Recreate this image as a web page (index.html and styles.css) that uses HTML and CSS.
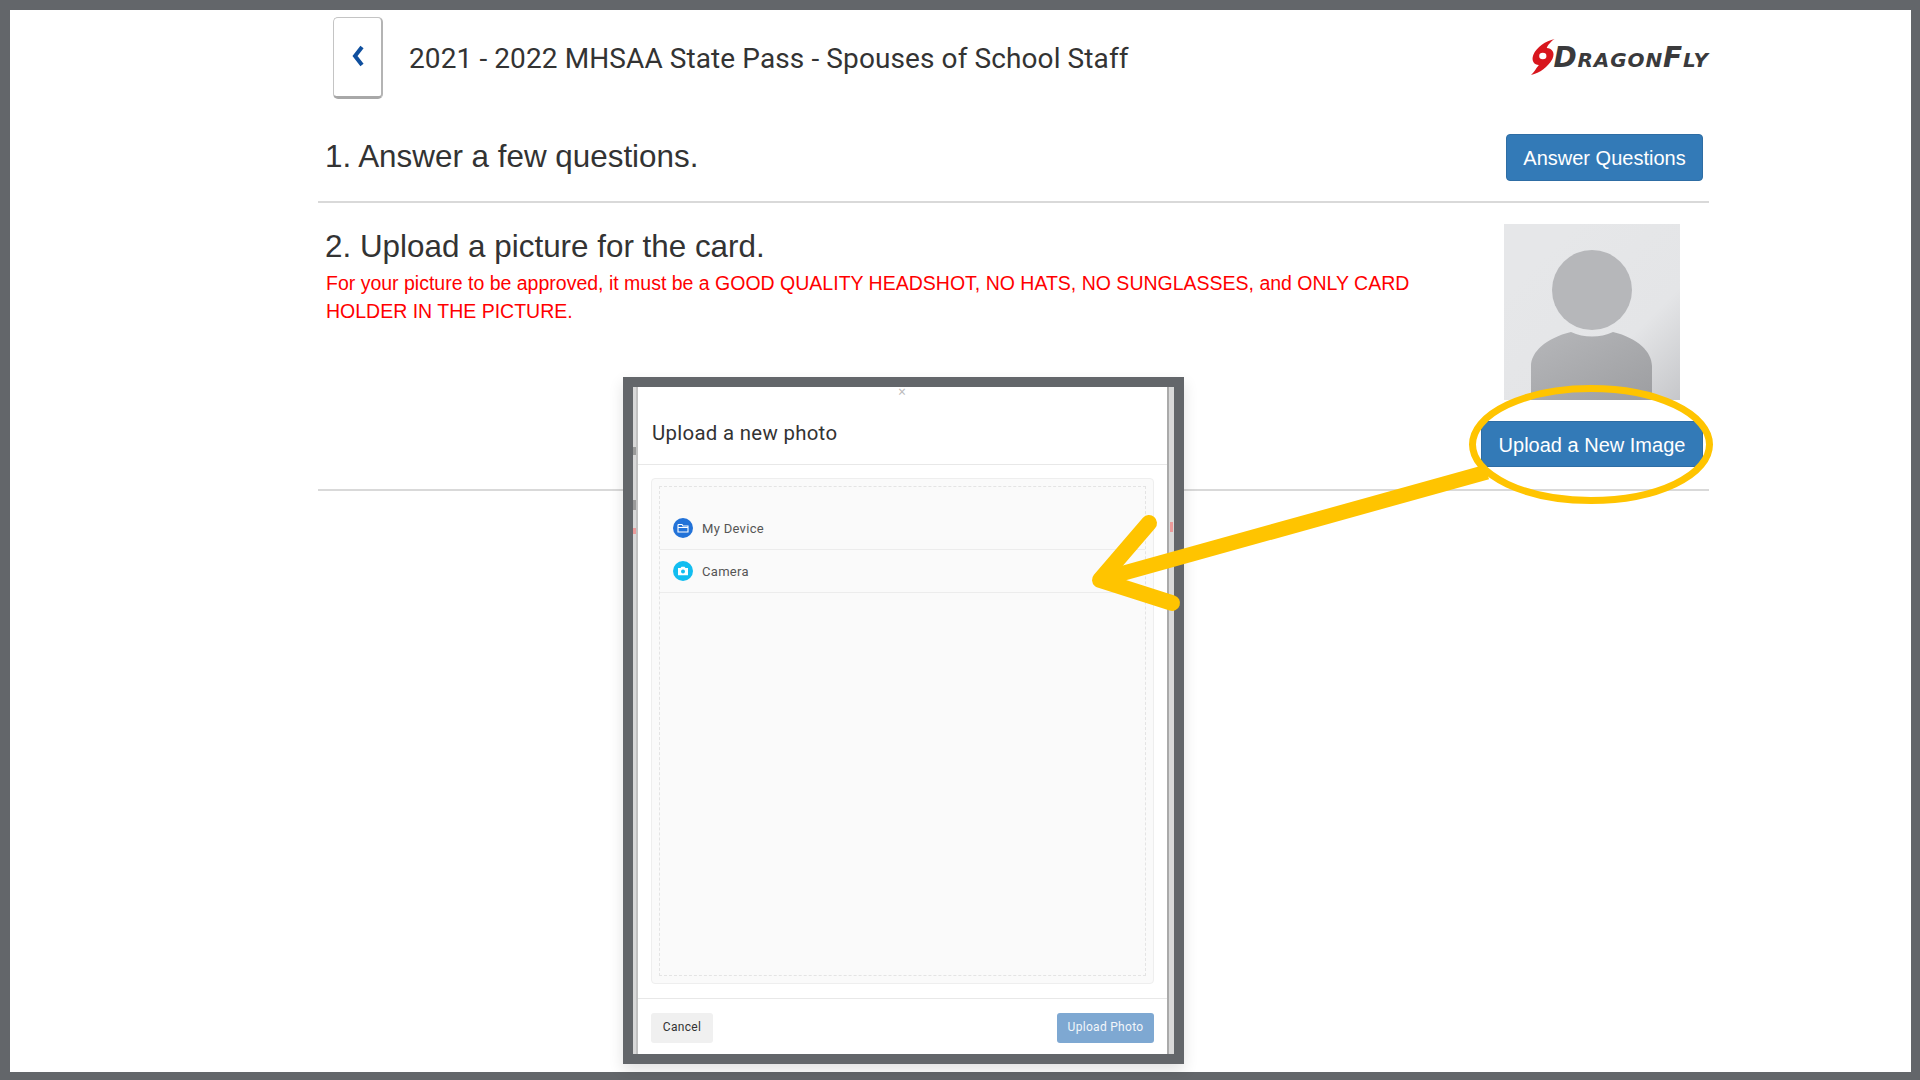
FILE: index.html
```html
<!DOCTYPE html>
<html lang="en">
<head>
    <meta charset="UTF-8">
    <meta name="viewport" content="width=device-width, initial-scale=1.0">
    <title>Upload a New Image</title>
    <link rel="stylesheet" href="styles.css">
</head>
<body>
    <div class="page">
        <header class="top-bar">
            <button class="back-btn" aria-label="Back">
                <svg width="14" height="22" viewBox="0 0 14 22"><path d="M11 2 L4 11 L11 20" fill="none" stroke="#0f4f9e" stroke-width="4"/></svg>
            </button>
            <h1 class="page-title">2021 - 2022 MHSAA State Pass - Spouses of School Staff</h1>
            <div class="logo">
                <svg class="logo-swirl" width="27" height="38" viewBox="0 0 24 38" preserveAspectRatio="none">
                    <path d="M21 1 C13 3 5 9 2 17 C0 23 3 27 7 27 C4 31 3 34 0 37 C8 35 15 29 19 21 C22 14 18 10 14 10 C15 7 18 3 21 1 Z" fill="#d8161d"/>
                    <circle cx="10.5" cy="18" r="3.2" fill="#fff"/>
                </svg>
                <span class="logo-text">DragonFly</span>
            </div>
        </header>

        <section class="step step-one">
            <h2 class="step-title">1. Answer a few questions.</h2>
            <a class="btn-blue btn-answer">Answer Questions</a>
        </section>

        <section class="step step-two">
            <div class="step-text">
                <h2 class="step-title">2. Upload a picture for the card.</h2>
                <p class="warning">For your picture to be approved, it must be a GOOD QUALITY HEADSHOT, NO HATS, NO SUNGLASSES, and ONLY CARD HOLDER IN THE PICTURE.</p>
            </div>
            <div class="photo-col">
                <svg class="avatar" width="176" height="176" viewBox="0 0 176 176">
                    <defs>
                        <linearGradient id="avatarBg" x1="0.2" y1="0.2" x2="1" y2="1">
                            <stop offset="0" stop-color="#e6e7e9"/>
                            <stop offset="0.6" stop-color="#e4e5e7"/>
                            <stop offset="1" stop-color="#c6c7ca"/>
                        </linearGradient>
                        <linearGradient id="avatarBody" x1="0" y1="0" x2="1" y2="1">
                            <stop offset="0" stop-color="#b6b7ba"/>
                            <stop offset="1" stop-color="#9d9ea1"/>
                        </linearGradient>
                    </defs>
                    <rect width="176" height="176" fill="url(#avatarBg)"/>
                    <circle cx="88" cy="66" r="40" fill="#b6b7ba"/>
                    <path d="M27 176 V142 C27 128 42 114 67 108 C80 114 96 114 109 108 C134 114 148 128 148 142 V176 Z" fill="url(#avatarBody)"/>
                </svg>
                <a class="btn-blue btn-upload">Upload a New Image</a>
            </div>
        </section>
    </div>

    <div class="modal">
        <div class="modal-side">
            <span class="scrap scrap-a"></span>
            <span class="scrap scrap-b"></span>
            <span class="scrap scrap-c"></span>
            <span class="scrap scrap-d"></span>
            <div class="modal-content">
                <span class="modal-close">&times;</span>
                <div class="modal-head">Upload a new photo</div>
                <div class="modal-main">
                    <div class="dropzone">
                        <ul class="source-list">
                            <li class="source-row">
                                <span class="source-icon icon-device">
                                    <svg width="12" height="12" viewBox="0 0 12 12"><path d="M1 3 V10 H11 V4 H6 L5 2.5 H1.5 Z M1 5.5 H11" fill="none" stroke="#fff" stroke-width="1.1"/></svg>
                                </span>
                                My Device
                            </li>
                            <li class="source-row">
                                <span class="source-icon icon-camera">
                                    <svg width="12" height="12" viewBox="0 0 12 12"><path fill-rule="evenodd" d="M1 3 H3.5 L4.5 1.8 H7.5 L8.5 3 H11 V10.2 H1 Z M6 4.4 A2 2 0 1 0 6 8.4 A2 2 0 1 0 6 4.4 Z" fill="#fff"/></svg>
                                </span>
                                Camera
                            </li>
                        </ul>
                    </div>
                </div>
                <div class="modal-foot">
                    <a class="btn-cancel">Cancel</a>
                    <a class="btn-photo">Upload Photo</a>
                </div>
            </div>
        </div>
    </div>

    <svg class="callout" width="1920" height="1080" viewBox="0 0 1920 1080">
        <ellipse cx="1591" cy="444.500" rx="118.500" ry="56" fill="none" stroke="#ffc400" stroke-width="7"/>
        <path d="M1487 472 L1106 578" fill="none" stroke="#ffc400" stroke-width="15"/>
        <path d="M1149 523 L1100 580 L1172 603" fill="none" stroke="#ffc400" stroke-width="16" stroke-linecap="round" stroke-linejoin="round"/>
    </svg>
</body>
</html>
```

FILE: styles.css
```css
* {
    box-sizing: border-box;
}

html, body {
    margin: 0;
    height: 100%;
}

body {
    background-color: #fff;
    border-style: solid;
    border-color: #63666a;
    border-width: 10px 9px 8px 10px;
    font-family: "Liberation Sans", Arial, sans-serif;
    overflow: hidden;
}

.page {
    width: 1391px;
    margin-left: 308px;
}

.top-bar {
    display: flex;
    align-items: center;
    height: 89px;
    padding: 7px 0 0 15px;
}

.back-btn {
    display: flex;
    align-items: center;
    justify-content: center;
    width: 50px;
    height: 82px;
    padding: 0 0 2px;
    background-color: #fff;
    border: 1px solid #c4c4c4;
    border-bottom: 3px solid #a8a8a8;
    border-right: 2px solid #b4b4b4;
    border-radius: 5px;
}

.page-title {
    margin: 0 0 0 26px;
    font-family: Roboto, sans-serif;
    font-size: 28px;
    font-weight: 400;
    color: #333;
    letter-spacing: 0.1px;
    white-space: nowrap;
}

.logo {
    display: flex;
    align-items: center;
    margin-left: auto;
    margin-top: -2px;
}

.logo-text {
    margin-left: -5px;
    font-family: "DejaVu Sans", sans-serif;
    font-size: 28px;
    font-weight: 700;
    font-style: italic;
    font-variant: small-caps;
    color: #3a3a3c;
    letter-spacing: 0.9px;
}

.step {
    display: flex;
    justify-content: space-between;
    padding-left: 7px;
    padding-right: 6px;
    border-bottom: 2px solid #d9d9d9;
}

.step-one {
    align-items: center;
    height: 104px;
    padding-top: 14px;
}

.step-two {
    height: 288px;
    padding-top: 21px;
}

.step-title {
    margin: 0;
    font-size: 31.400px;
    font-weight: 400;
    color: #333;
}

.step-text {
    width: 1100px;
    padding-top: 5px;
}

.warning {
    margin: 4px 0 0 1px;
    font-size: 19.500px;
    line-height: 28px;
    color: #f00;
}

.photo-col {
    display: flex;
    flex-direction: column;
    align-items: center;
    width: 222px;
}

.avatar {
    display: block;
    margin-bottom: 21px;
}

.btn-blue {
    display: block;
    background-color: #337ab7;
    border: 1px solid #2e6da4;
    border-radius: 4px;
    color: #fff;
    font-size: 20px;
    text-align: center;
}

.btn-answer {
    width: 197px;
    height: 47px;
    line-height: 47px;
}

.btn-upload {
    width: 222px;
    height: 46px;
    line-height: 46px;
}

/* the pasted screenshot of the upload dialog */
.modal {
    position: absolute;
    left: 623px;
    top: 377px;
    width: 561px;
    height: 687px;
    background-color: #fff;
    border: 10px solid #63666a;
    box-shadow: 0 6px 14px rgba(0, 0, 0, 0.12);
}

.modal-side {
    position: relative;
    height: 100%;
    background-color: #fff;
    border-left: 3px solid #d9d9d9;
    border-right: 5px solid #d9d9d9;
}

/* bits of the page behind the dialog that show at its edges */
.scrap {
    position: absolute;
    width: 3px;
}

.scrap-a {
    left: -3px;
    top: 60px;
    height: 8px;
    background-color: #9a9a9a;
}

.scrap-b {
    left: -3px;
    top: 113px;
    height: 10px;
    background-color: #9a9a9a;
}

.scrap-c {
    left: -3px;
    top: 141px;
    height: 6px;
    background-color: #eb9a9a;
}

.scrap-d {
    right: -4px;
    top: 135px;
    height: 10px;
    background-color: #eb9a9a;
}

.modal-content {
    position: relative;
    display: flex;
    flex-direction: column;
    height: 100%;
    border-left: 2px solid #c2c2c2;
    border-right: 2px solid #aaa;
    font-family: "Noto Sans", sans-serif;
}

.modal-close {
    position: absolute;
    top: -3px;
    left: 260px;
    font-size: 14px;
    line-height: 16px;
    color: #bbb;
}

.modal-head {
    flex: none;
    height: 78px;
    padding: 16px 14px 0;
    border-bottom: 1px solid #e8e8e8;
    font-family: Roboto, sans-serif;
    font-size: 20.400px;
    line-height: 60px;
    letter-spacing: 0.3px;
    color: #333;
}

.modal-main {
    flex: 1;
    padding: 13px 13px 14px;
}

.dropzone {
    height: 100%;
    padding: 7px;
    background-color: #fafafa;
    border: 1px solid #eee;
    border-radius: 4px;
}

.source-list {
    height: 100%;
    margin: 0;
    padding: 20px 0 0;
    list-style: none;
    border: 1px dashed #e4e4e4;
}

.source-row {
    display: flex;
    align-items: center;
    height: 43px;
    padding-left: 13px;
    border-bottom: 1px solid #ececec;
    font-family: Roboto, sans-serif;
    font-size: 13px;
    letter-spacing: 0.3px;
    color: #555;
}

.source-icon {
    display: flex;
    align-items: center;
    justify-content: center;
    width: 20px;
    height: 20px;
    margin-right: 9px;
    border-radius: 50%;
}

.icon-device {
    background-color: #2272d8;
}

.icon-camera {
    background-color: #12bdf0;
}

.modal-foot {
    flex: none;
    display: flex;
    justify-content: space-between;
    height: 56px;
    padding: 14px 13px 12px;
    border-top: 1px solid #e8e8e8;
    font-family: Roboto, sans-serif;
    font-size: 12px;
    letter-spacing: 0.3px;
}

.btn-cancel,
.btn-photo {
    height: 30px;
    line-height: 28px;
    text-align: center;
    border-radius: 3px;
}

.btn-cancel {
    width: 62px;
    background-color: #f0f0f0;
    color: #333;
}

.btn-photo {
    width: 97px;
    background-color: #7ea8d2;
    color: #f2f6fa;
}

.callout {
    position: absolute;
    left: 0;
    top: 0;
    pointer-events: none;
}
```
